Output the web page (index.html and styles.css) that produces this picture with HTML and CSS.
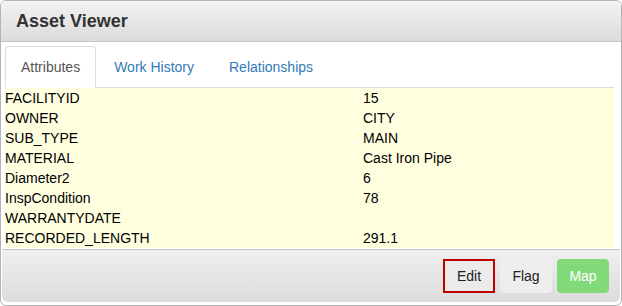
FILE: index.html
```html
<!DOCTYPE html>
<html lang="en">
<head>
  <meta charset="UTF-8">
  <title>Asset Viewer</title>
  <link rel="stylesheet" href="styles.css">
</head>
<body>

  <div class="panel">
    <div class="panel-header">Asset Viewer</div>

    <div class="panel-body">
      <ul class="tabs">
        <li class="tab active">Attributes</li>
        <li class="tab">Work History</li>
        <li class="tab">Relationships</li>
      </ul>

      <table class="attributes">
        <tr><td class="name">FACILITYID</td><td>15</td></tr>
        <tr><td class="name">OWNER</td><td>CITY</td></tr>
        <tr><td class="name">SUB_TYPE</td><td>MAIN</td></tr>
        <tr><td class="name">MATERIAL</td><td>Cast Iron Pipe</td></tr>
        <tr><td class="name">Diameter2</td><td>6</td></tr>
        <tr><td class="name">InspCondition</td><td>78</td></tr>
        <tr><td class="name">WARRANTYDATE</td><td></td></tr>
        <tr><td class="name">RECORDED_LENGTH</td><td>291.1</td></tr>
      </table>
    </div>

    <div class="panel-footer">
      <button class="btn edit">Edit</button>
      <button class="btn flag">Flag</button>
      <button class="btn map">Map</button>
    </div>
  </div>

</body>
</html>
```

FILE: styles.css
```css
* {
  margin: 0;
  padding: 0;
  box-sizing: border-box;
}

body {
  font-family: "Liberation Sans", Arial, sans-serif;
  font-size: 14px;
  color: #000;
  background: #fff;
}

.panel {
  width: 622px;
  height: 306px;
  border: 1px solid #b4b4b4;
  border-radius: 6px;
  background: #fff;
  display: flex;
  flex-direction: column;
  overflow: hidden;
}

.panel-header {
  height: 41px;
  padding: 0 15px;
  display: flex;
  align-items: center;
  font-size: 18px;
  font-weight: bold;
  color: #333;
  background: linear-gradient(#f2f2f2, #dcdcdc);
  border-bottom: 1px solid #c4c4c4;
}

.panel-body {
  padding: 4px 7px 0 4px;
}

.tabs {
  list-style: none;
  display: flex;
  height: 42px;
  border-bottom: 1px solid #ddd;
}

.tab {
  padding: 0 14px 0 17px;
  margin-right: 2px;
  line-height: 40px;
  color: #337ab7;
  border: 1px solid transparent;
  border-radius: 4px 4px 0 0;
}

.tab.active {
  color: #555;
  border-color: #ddd;
  border-bottom-color: #fff;
  margin-bottom: -1px;
  height: 42px;
  padding: 0 15px;
  margin-right: 0;
}

.attributes {
  width: 609px;
  border-collapse: collapse;
  background: #ffffe0;
}

.attributes td {
  height: 20px;
  padding: 0;
  vertical-align: middle;
}

.attributes .name {
  width: 358px;
}

.panel-footer {
  flex: 1;
  margin: 1px 1px 3px 1px;
  padding: 0 11px 0 0;
  display: flex;
  justify-content: flex-end;
  align-items: center;
  gap: 5px;
  background: linear-gradient(#efefef, #dcdcdc);
  border-top: 1px solid #c4c4c4;
  border-radius: 0 0 6px 6px;
}

.btn {
  font-family: inherit;
  font-size: 14px;
  height: 34px;
  width: 52px;
  border: 1px solid transparent;
  border-radius: 4px;
  background: #eee;
  color: #222;
  cursor: pointer;
}

.btn.edit {
  border: 2px solid #c00000;
  border-radius: 0;
  background: #ebebeb;
}

.btn.map {
  background: #82d97a;
  color: #fff;
}
```
